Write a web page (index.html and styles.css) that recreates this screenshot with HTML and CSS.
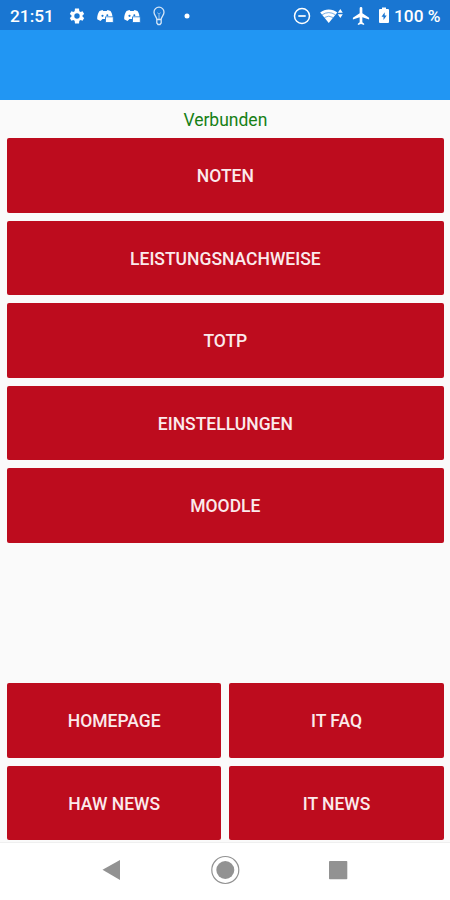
FILE: index.html
```html
<!DOCTYPE html>
<html lang="de">
<head>
<meta charset="utf-8">
<title>Verbunden</title>
<link rel="stylesheet" href="styles.css">
</head>
<body>
<div class="screen">
  <header class="status">
    <span class="clock">21:51</span>
    <div class="notifications">
      <svg width="18" height="18" viewBox="0 0 24 24" fill="#fff"><path fill-rule="evenodd" d="M19.4 13c.1-.7.1-1.3 0-2l2.2-1.7-2.2-3.7-2.6 1a8 8 0 0 0-1.7-1L14.700 2H9.300l-.4 3.600a8 8 0 0 0-1.700 1l-2.600-1-2.200 3.700L4.600 11c-.1.700-.1 1.300 0 2l-2.200 1.700 2.200 3.700 2.600-1a8 8 0 0 0 1.700 1l.4 3.600h5.400l.4-3.600a8 8 0 0 0 1.700-1l2.600 1 2.200-3.700zM12 8.400a3.600 3.600 0 1 1 0 7.200 3.600 3.600 0 0 1 0-7.200z"/></svg>
      <svg class="chat" width="18" height="16" viewBox="0 0 18 16"><path d="M3.500 3 6.500 2l.8 1h3.400l.8-1 3 1c1.400 2 2 4 2 6.500H9.500l-.5 1.500H6.500L4.500 13 1.200 11.300C1 8 2 5 3.500 3z" fill="#fff"/><circle cx="6.500" cy="7.800" r="1.100" fill="#1976d2"/><circle cx="11.300" cy="7.300" r="1" fill="#1976d2"/><path d="M9.500 8.800h7.800v5.700H9.500z" fill="#fff" stroke="#1976d2" stroke-width=".8"/></svg>
      <svg class="chat" width="18" height="16" viewBox="0 0 18 16"><path d="M3.500 3 6.500 2l.8 1h3.400l.8-1 3 1c1.400 2 2 4 2 6.500H9.500l-.5 1.500H6.500L4.500 13 1.200 11.300C1 8 2 5 3.500 3z" fill="#fff"/><circle cx="6.500" cy="7.800" r="1.100" fill="#1976d2"/><circle cx="11.300" cy="7.300" r="1" fill="#1976d2"/><path d="M9.500 8.800h7.800v5.700H9.500z" fill="#fff" stroke="#1976d2" stroke-width=".8"/></svg>
      <svg class="bulb" width="14" height="20" viewBox="0 0 14 20" fill="none" stroke="#d5e6f8" stroke-width="1.300"><path d="M4.800 13.500C4.800 10.500 2 9.500 2 6.200a5 5 0 0 1 10 0c0 3.300-2.800 4.300-2.800 7.300zM4.800 13.500v3.500L6 18.500h2l1.200-1.500v-3.500"/><path d="M5.400 6.800 7 8.200l1.600-1.400M7 8.500v4.500" stroke-width=".7"/></svg>
      <svg class="dot" width="6" height="6" viewBox="0 0 6 6"><circle cx="3" cy="3" r="2.500" fill="#fff"/></svg>
    </div>
    <div class="system">
      <svg width="18" height="18" viewBox="0 0 18 18" fill="none" stroke="#fff"><circle cx="9" cy="9" r="7.500" stroke-width="1.500"/><path d="M5.300 9h7.400" stroke-width="1.700"/></svg>
      <svg class="wifi" width="24" height="16" viewBox="0 0 24 16"><path d="M.2 4.500C5 .6 12.500.6 17.300 4.500L8.750 15z" fill="#fff"/><path d="M2.200 6.700q6.550-4.200 13.100 0M4.500 9.500q4.200-2.700 8.500 0" fill="none" stroke="#1976d2" stroke-width=".6"/><path d="m20.300 1 2.500 3.700h-5zM20.300 10l-2.500-3.700h5z" fill="#fff"/></svg>
      <svg class="plane" width="18" height="18" viewBox="2 2 20 20" fill="#fff"><path d="M21 16v-2l-7.500-5V3.500a1.500 1.500 0 0 0-3 0V9L3 14v2l7.500-2.500V19l-2 1.500V22l3.500-1 3.500 1v-1.500l-2-1.500v-5.500z"/></svg>
      <svg class="battery" width="12" height="17" viewBox="0 0 12 17"><path d="M4 .5h4V2h2q1 0 1 1V15q0 1-1 1H2q-1 0-1-1V3q0-1 1-1h2z" fill="#fff"/><path d="M6.700 5.200 3.500 9.800h2v3.300l3.200-4.600h-2z" fill="#1976d2"/></svg>
      <span class="percent">100 %</span>
    </div>
  </header>
  <div class="toolbar"></div>
  <main class="content">
    <p class="state">Verbunden</p>
    <div class="menu">
      <button>NOTEN</button>
      <button>LEISTUNGSNACHWEISE</button>
      <button>TOTP</button>
      <button>EINSTELLUNGEN</button>
      <button>MOODLE</button>
    </div>
    <div class="links">
      <button>HOMEPAGE</button>
      <button>IT FAQ</button>
      <button>HAW NEWS</button>
      <button>IT NEWS</button>
    </div>
  </main>
  <nav class="navbar">
    <svg width="30" height="30" viewBox="0 0 30 30"><path d="M5.500 14.800 23 5v20z" fill="#929292"/></svg>
    <svg width="30" height="30" viewBox="0 0 30 30"><circle cx="15.300" cy="15" r="13.500" fill="none" stroke="#929292" stroke-width="1.200"/><circle cx="15.300" cy="15" r="9" fill="#929292"/></svg>
    <svg width="30" height="30" viewBox="0 0 30 30"><rect x="6" y="5.900" width="18.300" height="18.300" rx=".8" fill="#929292"/></svg>
  </nav>
</div>
</body>
</html>
```

FILE: styles.css
```css
* { box-sizing: border-box; }
body { margin: 0; font-family: Roboto, sans-serif; }
.screen {
  width: 450px;
  height: 900px;
  display: flex;
  flex-direction: column;
  background: #fafafa;
  overflow: hidden;
}
.status {
  height: 30px;
  flex: none;
  display: flex;
  align-items: center;
  padding: 1px 9.500px 0 10px;
  background: #1976d2;
  color: #fff;
  font-size: 17.300px;
  font-weight: 500;
  line-height: 20px;
  white-space: nowrap;
}
.clock { width: 58px; padding-top: 1px; }
.notifications { display: flex; align-items: center; gap: 9px; }
.notifications .chat { margin-left: 1px; }
.chat + .chat { margin-left: 0; }
.notifications .bulb { margin-left: 2px; }
.notifications .dot { margin-left: 9px; }
.system { display: flex; align-items: center; margin-left: auto; }
.wifi { margin-left: 9px; }
.plane { margin-left: 8px; }
.battery { margin-left: 8px; }
.percent { margin-left: 4px; padding-top: 1px; }
.toolbar { height: 70px; flex: none; background: #2196f3; }
.content {
  flex: 1;
  display: flex;
  flex-direction: column;
  padding: 0 6.300px 1.700px 7px;
}
.state {
  margin: 0;
  height: 38.300px;
  line-height: 41px;
  text-align: center;
  color: #168016;
  font-size: 17.500px;
}
.menu { display: grid; gap: 8px; }
.links {
  display: grid;
  grid-template-columns: 1fr 1fr;
  gap: 8px;
  margin-top: auto;
}
button {
  height: 74.500px;
  padding: 1.500px 0 0;
  border: 0;
  border-radius: 2px;
  background: #bd0c1e;
  color: #fbeaec;
  font: 500 17.500px/20px Roboto, sans-serif;
}
.navbar {
  height: 58px;
  flex: none;
  display: flex;
  justify-content: center;
  align-items: center;
  gap: 83px;
  padding-bottom: 3px;
  background: #fff;
  border-top: 1px solid #efefef;
}
```
